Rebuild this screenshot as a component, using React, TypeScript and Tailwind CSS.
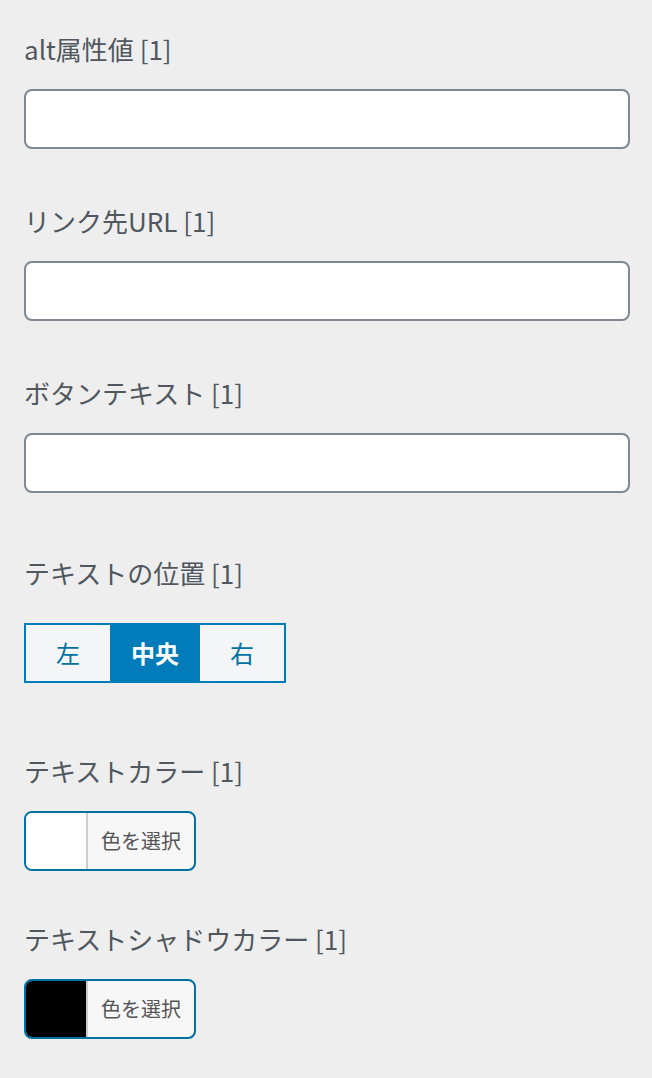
const font = "font-['Hiragino_Sans','Noto_Sans_CJK_JP',sans-serif]";

function Label({ children, className = "" }: { children: React.ReactNode; className?: string }) {
  return (
    <div className={`text-[26px] leading-[36px] text-[#50575e] ${className}`}>{children}</div>
  );
}

function TextInput({ className = "" }: { className?: string }) {
  return (
    <input
      type="text"
      className={`block h-[60px] w-full rounded-lg border-2 border-[#7e8993] bg-white px-4 text-[26px] outline-none ${className}`}
    />
  );
}

function ColorPicker({ color }: { color: string }) {
  return (
    <button
      type="button"
      className="flex h-[60px] w-[172px] overflow-hidden rounded-lg border-2 border-[#0071a1] bg-[#f7f7f7]"
    >
      <span className={`h-full w-[62px] shrink-0 border-r-2 border-[#cccccc] ${color}`} />
      <span className="flex h-full flex-1 items-center justify-center text-[20px] text-[#555555]">
        色を選択
      </span>
    </button>
  );
}

const aligns = [
  { label: "左", width: "w-[84px]", active: false },
  { label: "中央", width: "w-[90px]", active: true },
  { label: "右", width: "w-[84px]", active: false },
];

export default function App() {
  return (
    <div className={`min-h-screen bg-[#eeeeee] pl-6 pr-[22px] pt-[31px] pb-10 ${font}`}>
      <Label>alt属性値 [1]</Label>
      <TextInput className="mt-[22px]" />

      <Label className="mt-[54px]">リンク先URL [1]</Label>
      <TextInput className="mt-[22px]" />

      <Label className="mt-[54px]">ボタンテキスト [1]</Label>
      <TextInput className="mt-[22px]" />

      <Label className="mt-[62px]">テキストの位置 [1]</Label>
      <div className="mt-[32px] flex h-[60px] w-max border-2 border-[#007cba]">
        {aligns.map((a) =>
          a.active ? (
            <button
              key={a.label}
              type="button"
              className={`${a.width} bg-[#007cba] text-[24px] font-bold text-white`}
            >
              {a.label}
            </button>
          ) : (
            <button
              key={a.label}
              type="button"
              className={`${a.width} bg-[#f3f5f6] text-[24px] text-[#0071a1]`}
            >
              {a.label}
            </button>
          )
        )}
      </div>

      <Label className="mt-[70px]">テキストカラー [1]</Label>
      <div className="mt-[22px]">
        <ColorPicker color="bg-white" />
      </div>

      <Label className="mt-[50px]">テキストシャドウカラー [1]</Label>
      <div className="mt-[22px]">
        <ColorPicker color="bg-black" />
      </div>
    </div>
  );
}
